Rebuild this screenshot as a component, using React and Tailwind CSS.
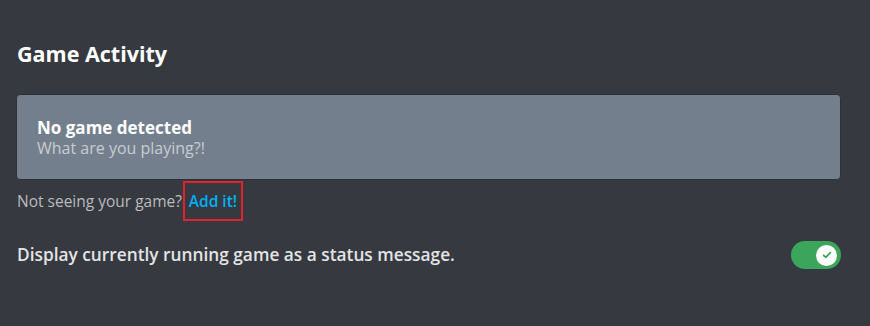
import React from "react";

function Toggle() {
  return (
    <div className="w-[50px] h-[28px] rounded-full bg-[#3ba55c] flex items-center justify-end pr-[4px]">
      <div className="w-[21px] h-[21px] rounded-full bg-white flex items-center justify-center">
        <svg width="12" height="12" viewBox="0 0 20 20" fill="none">
          <path d="M4.5 10.5l3.5 3.5 7.5-8" stroke="#3ba55c" strokeWidth="3" strokeLinecap="round" strokeLinejoin="round" />
        </svg>
      </div>
    </div>
  );
}

export default function App() {
  return (
    <div
      className="w-[870px] h-[326px] bg-[#36393f] px-4 pt-[39px]"
      style={{ fontFamily: '"Open Sans", "Noto Sans", sans-serif' }}
    >
      <h2 className="text-[21.5px] font-bold text-white leading-[30px] pl-[1px]">
        Game Activity
      </h2>

      <div className="mt-[25px] w-[825px] h-[86px] rounded-[4px] bg-[#747f8d] border border-[#2f3136] px-5 pt-[22px]">
        <div className="text-[17px] font-bold text-white leading-[21px]">No game detected</div>
        <div className="text-[16px] text-[#c7ccd1] leading-[21px]">What are you playing?!</div>
      </div>

      <div className="flex items-center mt-[1px] text-[15.5px] leading-[20px] pl-[1px]">
        <span className="text-[#b9bbbe]">Not seeing your game?</span>
        <span className="ml-[1px] border-2 border-[#e0232e] h-[40px] w-[60px] flex items-center justify-center">
          <span className="text-[#00b0f4] font-semibold">Add it!</span>
        </span>
      </div>

      <div className="mt-[20px] flex items-center justify-between w-[825px]">
        <span className="text-[17.3px] text-[#e3e4e6] font-semibold leading-[20px] pl-[1px]">
          Display currently running game as a status message.
        </span>
        <Toggle />
      </div>
    </div>
  );
}
